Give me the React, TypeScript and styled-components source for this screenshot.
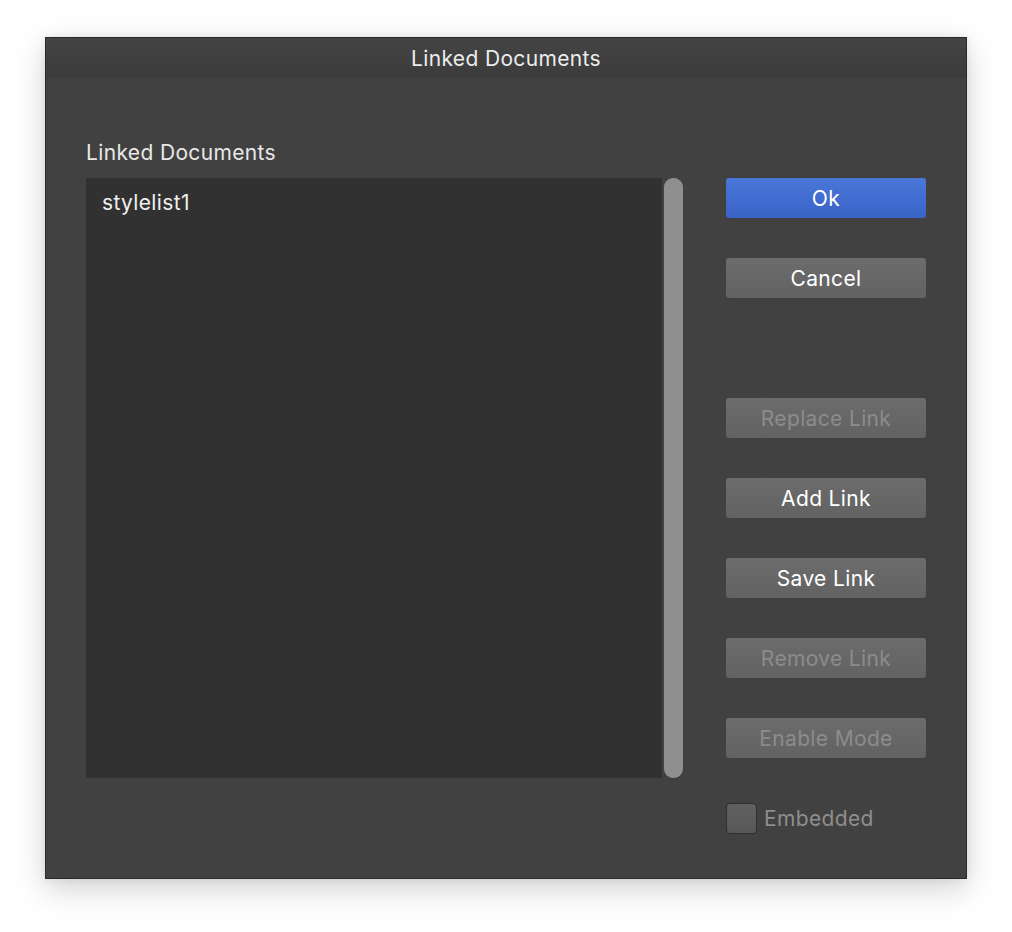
import React from "react";
import styled, { createGlobalStyle } from "styled-components";

const GlobalStyle = createGlobalStyle`
  html, body {
    margin: 0;
    padding: 0;
    background: #ffffff;
    font-family: Inter, "Noto Sans", "Liberation Sans", sans-serif;
  }
`;

const Page = styled.div`
  width: 1012px;
  height: 932px;
  padding: 37px 0 0 45px;
  box-sizing: border-box;
`;

const Window = styled.div`
  width: 922px;
  height: 842px;
  box-sizing: border-box;
  border: 1px solid #2a2a2a;
  background: #414141;
  display: flex;
  flex-direction: column;
  box-shadow: 0 10px 30px rgba(0, 0, 0, 0.18), 0 0 8px rgba(0, 0, 0, 0.08);
`;

const TitleBar = styled.div`
  height: 40px;
  flex: none;
  display: flex;
  align-items: center;
  justify-content: center;
  padding-top: 1px;
  box-sizing: border-box;
  background: linear-gradient(#444444, #3b3b3b);
  color: #ececec;
  font-size: 21px;
  letter-spacing: 0.35px;
`;

const Body = styled.div`
  flex: 1;
  display: grid;
  grid-template-columns: 597px 200px;
  grid-template-rows: 50px 600px;
  column-gap: 43px;
  row-gap: 12px;
  padding: 38px 40px 0 40px;
`;

const SectionLabel = styled.div`
  grid-column: 1;
  align-self: end;
  line-height: 26px;
  color: #e8e8e8;
  font-size: 21px;
  letter-spacing: 0.35px;
`;

const ListRow = styled.div`
  grid-column: 1;
  grid-row: 2;
  display: flex;
  gap: 2px;
`;

const List = styled.div`
  flex: 1;
  background: #313131;
  padding: 12px 16px;
  box-sizing: border-box;
`;

const ListItem = styled.div`
  color: #f0f0f0;
  font-size: 21px;
  letter-spacing: 0.35px;
`;

const ScrollTrack = styled.div`
  width: 19px;
  display: flex;
`;

const ScrollThumb = styled.div`
  flex: 1;
  background: #8f8f8f;
  border-radius: 9px;
`;

const ButtonColumn = styled.div`
  grid-column: 2;
  grid-row: 2;
  display: flex;
  flex-direction: column;
`;

const Button = styled.div<{ $primary?: boolean; $disabled?: boolean; $gap?: number }>`
  height: 40px;
  flex: none;
  margin-bottom: ${(p) => p.$gap ?? 40}px;
  border-radius: 3px;
  display: flex;
  align-items: center;
  justify-content: center;
  font-size: 21px;
  letter-spacing: 0.35px;
  color: ${(p) => (p.$disabled ? "#8c8c8c" : "#ffffff")};
  background: ${(p) =>
    p.$primary
      ? "linear-gradient(#4a77d9, #3a63c6)"
      : "linear-gradient(#6c6c6c, #626262)"};
`;

const CheckRow = styled.label`
  display: flex;
  align-items: center;
  gap: 7px;
  color: #8e8e8e;
  font-size: 21px;
  letter-spacing: 0.35px;
`;

const CheckBox = styled.span`
  width: 31px;
  height: 31px;
  flex: none;
  box-sizing: border-box;
  border: 1px solid #2e2e2e;
  border-radius: 4px;
  background: linear-gradient(#606060, #585858);
`;

export default function App() {
  return (
    <>
      <GlobalStyle />
      <Page>
        <Window>
          <TitleBar>Linked Documents</TitleBar>
          <Body>
            <SectionLabel>Linked Documents</SectionLabel>
            <ListRow>
              <List>
                <ListItem>stylelist1</ListItem>
              </List>
              <ScrollTrack>
                <ScrollThumb />
              </ScrollTrack>
            </ListRow>
            <ButtonColumn>
              <Button $primary>Ok</Button>
              <Button $gap={100}>Cancel</Button>
              <Button $disabled>Replace Link</Button>
              <Button>Add Link</Button>
              <Button>Save Link</Button>
              <Button $disabled>Remove Link</Button>
              <Button $disabled $gap={45}>Enable Mode</Button>
              <CheckRow>
                <CheckBox />
                Embedded
              </CheckRow>
            </ButtonColumn>
          </Body>
        </Window>
      </Page>
    </>
  );
}
